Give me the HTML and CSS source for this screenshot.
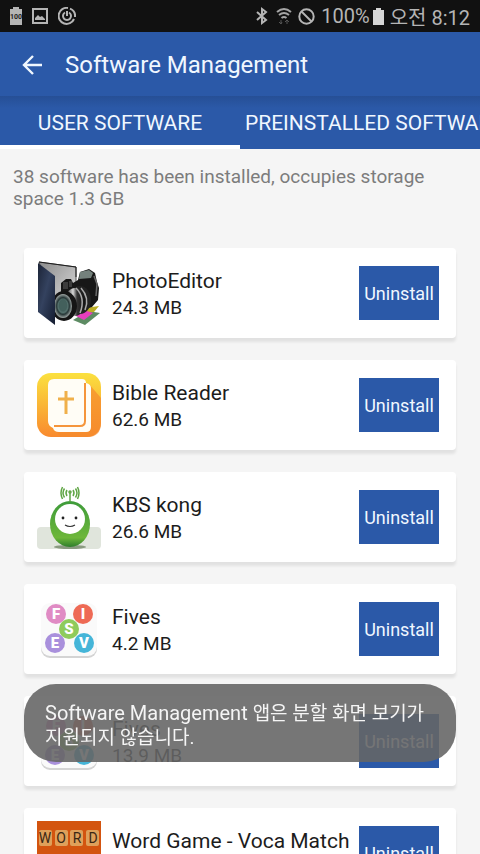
FILE: index.html
```html
<!DOCTYPE html>
<html lang="en">
  <head>
    <meta charset="UTF-8" />
    <meta name="viewport" content="width=device-width, initial-scale=1.0" />
    <title>Software Management</title>
    <link rel="stylesheet" href="styles.css">
  </head>
  <body>
    <!-- shared icon -->
    <svg class="defs" width="0" height="0">
      <symbol id="fives" viewBox="0 0 64 64">
        <rect x="4" y="8" width="56" height="53" rx="9" fill="#d4d4d4" />
        <rect x="4" y="6" width="56" height="53" rx="9" fill="#fafafa" />
        <circle cx="19" cy="17" r="10" fill="#e08bc4" />
        <circle cx="46" cy="17" r="10" fill="#ee6a55" />
        <circle cx="18" cy="46" r="10" fill="#a990dc" />
        <circle cx="47" cy="46" r="10" fill="#45b5d8" />
        <circle cx="32" cy="32" r="10" fill="#8fcb5c" />
        <g class="fives-letters">
          <text x="19" y="22">F</text>
          <text x="46" y="22">I</text>
          <text x="32" y="37">S</text>
          <text x="18" y="51">E</text>
          <text x="47" y="51">V</text>
        </g>
      </symbol>
    </svg>
    <div class="app">
      <div class="status">
        <div class="status-left">
          <svg width="12" height="18" viewBox="0 0 12 18">
            <path d="M0 2h3V0h6v2h3v16H0z" fill="#b5b5b5" />
            <text x="6" y="12" class="battery-num">100</text>
          </svg>
          <svg width="16" height="16" viewBox="0 0 16 16">
            <rect x="1" y="1" width="14" height="14" fill="none" stroke="#b5b5b5" stroke-width="2" />
            <path d="M3 12V10l3-3 2 2 2-1 3 3v1z" fill="#b5b5b5" />
          </svg>
          <svg width="18" height="18" viewBox="0 0 18 18" fill="none" stroke="#b5b5b5" stroke-width="2">
            <path d="M10 1A8 8 0 1 0 16 12M12 1.600A8 8 0 0 1 17 10" />
            <path d="M7 5.500a4 4 0 1 0 4 0M9 4v5" />
          </svg>
        </div>
        <div class="status-right">
          <svg width="12" height="18" viewBox="0 0 12 18" fill="none" stroke="#b5b5b5" stroke-width="2">
            <path d="M1 5l9 8-4 3V2l4 3-9 8" />
          </svg>
          <svg class="wifi" width="16" height="18" viewBox="0 0 16 18" fill="none" stroke="#a5a5a5" stroke-width="2">
            <path d="M1 5q7-6 14 0M3 8q5-4 10 0M5.500 11q2.500-2 5 0" />
            <path d="M5 13v4M3 15l2 2 1-2M11 17v-4M9 15l2-2 2 2" stroke="#555" stroke-width="1" />
          </svg>
          <svg width="17" height="17" viewBox="0 0 17 17" fill="none" stroke="#b5b5b5" stroke-width="2">
            <circle cx="8.500" cy="8.500" r="7.200" />
            <path d="M3.500 3.500l10 10" />
          </svg>
          <div class="battery">
            <span>100%</span>
            <svg width="11" height="17" viewBox="0 0 11 17">
              <path d="M0 2h3V0h5v2h3v15H0z" fill="#d6d6d6" />
            </svg>
          </div>
          <span>오전 8:12</span>
        </div>
      </div>

      <header class="toolbar">
        <button class="back" type="button" aria-label="Back">
          <svg width="20" height="20" viewBox="0 0 20 20" fill="none" stroke="#f0f7ff" stroke-width="2.400">
            <path d="M20 10H2M11 1l-9 9 9 9" />
          </svg>
        </button>
        <h1>Software Management</h1>
      </header>

      <nav class="tabs">
        <button class="tab active" type="button">USER SOFTWARE</button>
        <button class="tab" type="button">PREINSTALLED SOFTWARE</button>
      </nav>

      <main>
        <p class="summary">38 software has been installed, occupies storage space 1.3 GB</p>
        <ul class="list">
          <li class="card">
            <svg class="icon" viewBox="0 0 64 64">
              <defs>
                <linearGradient id="folder" x1="0" y1="0" x2="1" y2="1">
                  <stop offset="0" stop-color="#1c2437" />
                  <stop offset="0.450" stop-color="#34425f" />
                  <stop offset="1" stop-color="#141c30" />
                </linearGradient>
                <linearGradient id="paper" x1="0" y1="0" x2="1" y2="1">
                  <stop offset="0" stop-color="#8c8c8c" />
                  <stop offset="1" stop-color="#dedede" />
                </linearGradient>
                <linearGradient id="barrel">
                  <stop offset="0" stop-color="#222" />
                  <stop offset="0.400" stop-color="#d8d8d8" />
                  <stop offset="0.600" stop-color="#333" />
                  <stop offset="1" stop-color="#111" />
                </linearGradient>
                <radialGradient id="lens">
                  <stop offset="0" stop-color="#1c3434" />
                  <stop offset="0.550" stop-color="#54716d" />
                  <stop offset="0.700" stop-color="#263636" />
                  <stop offset="1" stop-color="#a0a8a6" />
                </radialGradient>
              </defs>
              <path d="M2 1l37 5v40H18z" fill="url(#paper)" stroke="#555" />
              <path d="M36 59l15-9 12 2-15 12z" fill="#5d8b63" />
              <path d="M48 47l14-2-5 6-12 1z" fill="#bcae25" />
              <path d="M37 54l10-5 9 3-9 7z" fill="#e83fbd" />
              <path d="M24 22l5-4h5l2 4 5-3 2-8 9-3 6 4 2 9 2 6-1 12-6 7-18 6-13-8z" fill="#171717" />
              <path d="M43 11l9-2 4 3-2 5-12 1z" fill="#74817c" />
              <path d="M26 21h5v7h-5zM32 20h3v6h-3z" fill="#3c3c3c" />
              <path d="M57 15l3 8-1 12" fill="none" stroke="#6a6a6a" stroke-width="1.500" />
              <ellipse cx="43" cy="39" rx="11" ry="14" fill="#222" />
              <ellipse cx="38" cy="41" rx="10" ry="14" fill="url(#barrel)" />
              <path d="M39 27q10 10 4 25M44 27q9 10 4 22" fill="none" stroke="#aaa" stroke-width="1.500" />
              <ellipse cx="27" cy="45" rx="13" ry="15" fill="#151515" />
              <ellipse cx="26" cy="45" rx="9" ry="12" fill="url(#lens)" />
              <ellipse cx="26" cy="44" rx="4" ry="6" fill="#43605c" />
              <path d="M1 2l17 13v49L1 51z" fill="url(#folder)" />
              <path d="M2 1l37 5v10" fill="none" stroke="#202020" />
            </svg>
            <div class="info">
              <h2>PhotoEditor</h2>
              <p>24.3 MB</p>
            </div>
            <button class="uninstall" type="button">Uninstall</button>
          </li>
          <li class="card">
            <svg class="icon" viewBox="0 0 64 64">
              <defs>
                <linearGradient id="bible" x1="0" y1="0" x2="0" y2="1">
                  <stop offset="0" stop-color="#fbe13f" />
                  <stop offset="1" stop-color="#f98a2e" />
                </linearGradient>
              </defs>
              <rect width="64" height="64" rx="14" fill="url(#bible)" />
              <path d="M52 11l12 14v25q0 14-14 14H24L16 54z" fill="#f58a2c" opacity="0.700" />
              <path d="M17 6h28q4 0 4 4 5 1 5 5v39q0 5-5 5H22q-5 0-6-4-5-2-5-7V12q0-6 6-6z" fill="#fffdf6" />
              <path d="M48 10v38q0 5-5 5H17" fill="none" stroke="#f5953b" stroke-width="2" />
              <path d="M29 18v23M21 26h16" stroke="#f0b04a" stroke-width="3" />
            </svg>
            <div class="info">
              <h2>Bible Reader</h2>
              <p>62.6 MB</p>
            </div>
            <button class="uninstall" type="button">Uninstall</button>
          </li>
          <li class="card">
            <svg class="icon" viewBox="0 0 64 64">
              <defs>
                <linearGradient id="kong" x1="0" y1="0" x2="0" y2="1">
                  <stop offset="0" stop-color="#3d9b3a" />
                  <stop offset="0.800" stop-color="#6eb73a" />
                  <stop offset="1" stop-color="#2e7d2c" />
                </linearGradient>
              </defs>
              <rect y="42" width="64" height="22" rx="4" fill="#e0e5dc" />
              <ellipse cx="33" cy="62" rx="16" ry="2" fill="#8a9a80" />
              <ellipse cx="33" cy="39" rx="20" ry="23" fill="url(#kong)" />
              <circle cx="33" cy="34" r="15" fill="#fff" />
              <circle cx="26" cy="33" r="1.400" fill="#222" />
              <circle cx="39" cy="33" r="1.400" fill="#222" />
              <path d="M28 40q5 3 10 0" fill="none" stroke="#333" stroke-width="1.200" />
              <g fill="none" stroke="#5fa544" stroke-width="1.500">
                <path d="M33 17V8M30 5q-2 3 0 6M36 5q2 3 0 6M27.500 3.500q-3 4.500 0 9M38.500 3.500q3 4.500 0 9M25.500 2q-3 6 0 12M40.500 2q3 6 0 12" />
                <circle cx="33" cy="7" r="1" />
              </g>
            </svg>
            <div class="info">
              <h2>KBS kong</h2>
              <p>26.6 MB</p>
            </div>
            <button class="uninstall" type="button">Uninstall</button>
          </li>
          <li class="card">
            <svg class="icon"><use href="#fives" /></svg>
            <div class="info">
              <h2>Fives</h2>
              <p>4.2 MB</p>
            </div>
            <button class="uninstall" type="button">Uninstall</button>
          </li>
          <li class="card">
            <svg class="icon"><use href="#fives" /></svg>
            <div class="info">
              <h2>Fives</h2>
              <p>13.9 MB</p>
            </div>
            <button class="uninstall" type="button">Uninstall</button>
          </li>
          <li class="card">
            <svg class="icon" viewBox="0 0 64 64">
              <rect width="64" height="64" fill="#d3540f" />
              <g fill="#dfa05a">
                <rect x="2" y="9" width="13" height="16" rx="2" />
                <rect x="18" y="9" width="13" height="16" rx="2" />
                <rect x="33" y="9" width="13" height="16" rx="2" />
                <rect x="49" y="9" width="13" height="16" rx="2" />
              </g>
              <g class="word-letters">
                <text x="8" y="22">W</text>
                <text x="24" y="22">O</text>
                <text x="40" y="22">R</text>
                <text x="56" y="22">D</text>
              </g>
            </svg>
            <div class="info">
              <h2>Word Game - Voca Match</h2>
            </div>
            <button class="uninstall" type="button">Uninstall</button>
          </li>
        </ul>
      </main>

      <div class="toast" role="status">Software Management <span lang="ko">앱은 분할 화면 보기가 지원되지 않습니다.</span></div>
    </div>
  </body>
</html>
```
FILE: styles.css
```css
* {
  box-sizing: border-box;
  margin: 0;
  padding: 0;
}
body {
  font-family: Roboto, "Noto Sans CJK KR", sans-serif;
  background-color: #f5f5f5;
  color: #1c1c1c;
}
button {
  border: none;
  font-family: inherit;
  color: #f0f7ff;
  cursor: pointer;
}
.defs {
  position: absolute;
}
.app {
  height: 100vh;
  overflow: hidden;
}
/* status bar */
.status {
  display: flex;
  justify-content: space-between;
  align-items: center;
  height: 32px;
  padding: 0 10px;
  background-color: #111;
  color: #b5b5b5;
  font-size: 20px;
}
.status-left,
.status-right,
.battery {
  display: flex;
  align-items: center;
}
.status-left {
  gap: 10px;
}
.status-right {
  gap: 6px;
}
.battery {
  gap: 3px;
}
.wifi {
  margin-left: 2px;
}
.battery-num {
  font-size: 7px;
  font-weight: bold;
  text-anchor: middle;
  fill: #222;
}
/* header */
.toolbar {
  display: flex;
  align-items: center;
  gap: 23px;
  height: 64px;
  padding: 2px 22px 0;
  background-color: #2b59a8;
}
.back {
  display: flex;
  background: none;
}
h1 {
  color: #f0f7ff;
  font-size: 24px;
  font-weight: 400;
}
.tabs {
  display: flex;
  height: 53px;
  overflow: hidden;
  background: linear-gradient(#264f96, #2b59a8 12px);
}
.tab {
  flex: none;
  min-width: 50%;
  padding: 5px 5px 0;
  border-bottom: 4px solid transparent;
  background: none;
  font-size: 21px;
  white-space: nowrap;
}
.tab.active {
  border-bottom-color: #fff;
}
/* list */
.summary {
  padding: 17px 13px 0;
  color: #7c7c7c;
  font-size: 19px;
  line-height: 22px;
}
.list {
  display: grid;
  grid-template-columns: minmax(0, 1fr);
  gap: 22px;
  padding: 38px 24px;
  list-style: none;
}
.card {
  display: flex;
  align-items: center;
  gap: 11px;
  height: 90px;
  padding: 0 17px 0 13px;
  border-radius: 4px;
  background-color: #fff;
  box-shadow: 0 4px 3px rgba(0, 0, 0, 0.08);
}
.icon {
  flex: none;
  width: 64px;
  height: 64px;
}
.info {
  flex: 1;
  align-self: flex-start;
  min-width: 0;
  padding-top: 19px;
  white-space: nowrap;
}
.info h2 {
  font-size: 21px;
  font-weight: 400;
  line-height: 28px;
}
.info p {
  font-size: 19px;
  line-height: 26px;
}
.uninstall {
  flex: none;
  width: 80px;
  height: 54px;
  background-color: #2b59a8;
  font-size: 18px;
}
.fives-letters {
  font-size: 15px;
  font-weight: 900;
  text-anchor: middle;
  fill: #fff;
}
.word-letters {
  font-size: 14px;
  text-anchor: middle;
  fill: #3a2714;
}
.toast {
  position: fixed;
  right: 24px;
  bottom: 92px;
  left: 24px;
  padding: 17px 21px 13px;
  border-radius: 32px;
  background-color: rgba(101, 101, 101, 0.89);
  color: #f5f5f5;
  font-size: 20px;
  line-height: 24px;
  word-break: keep-all;
}
.toast span {
  font-size: 19px;
  line-height: 1;
}
```
